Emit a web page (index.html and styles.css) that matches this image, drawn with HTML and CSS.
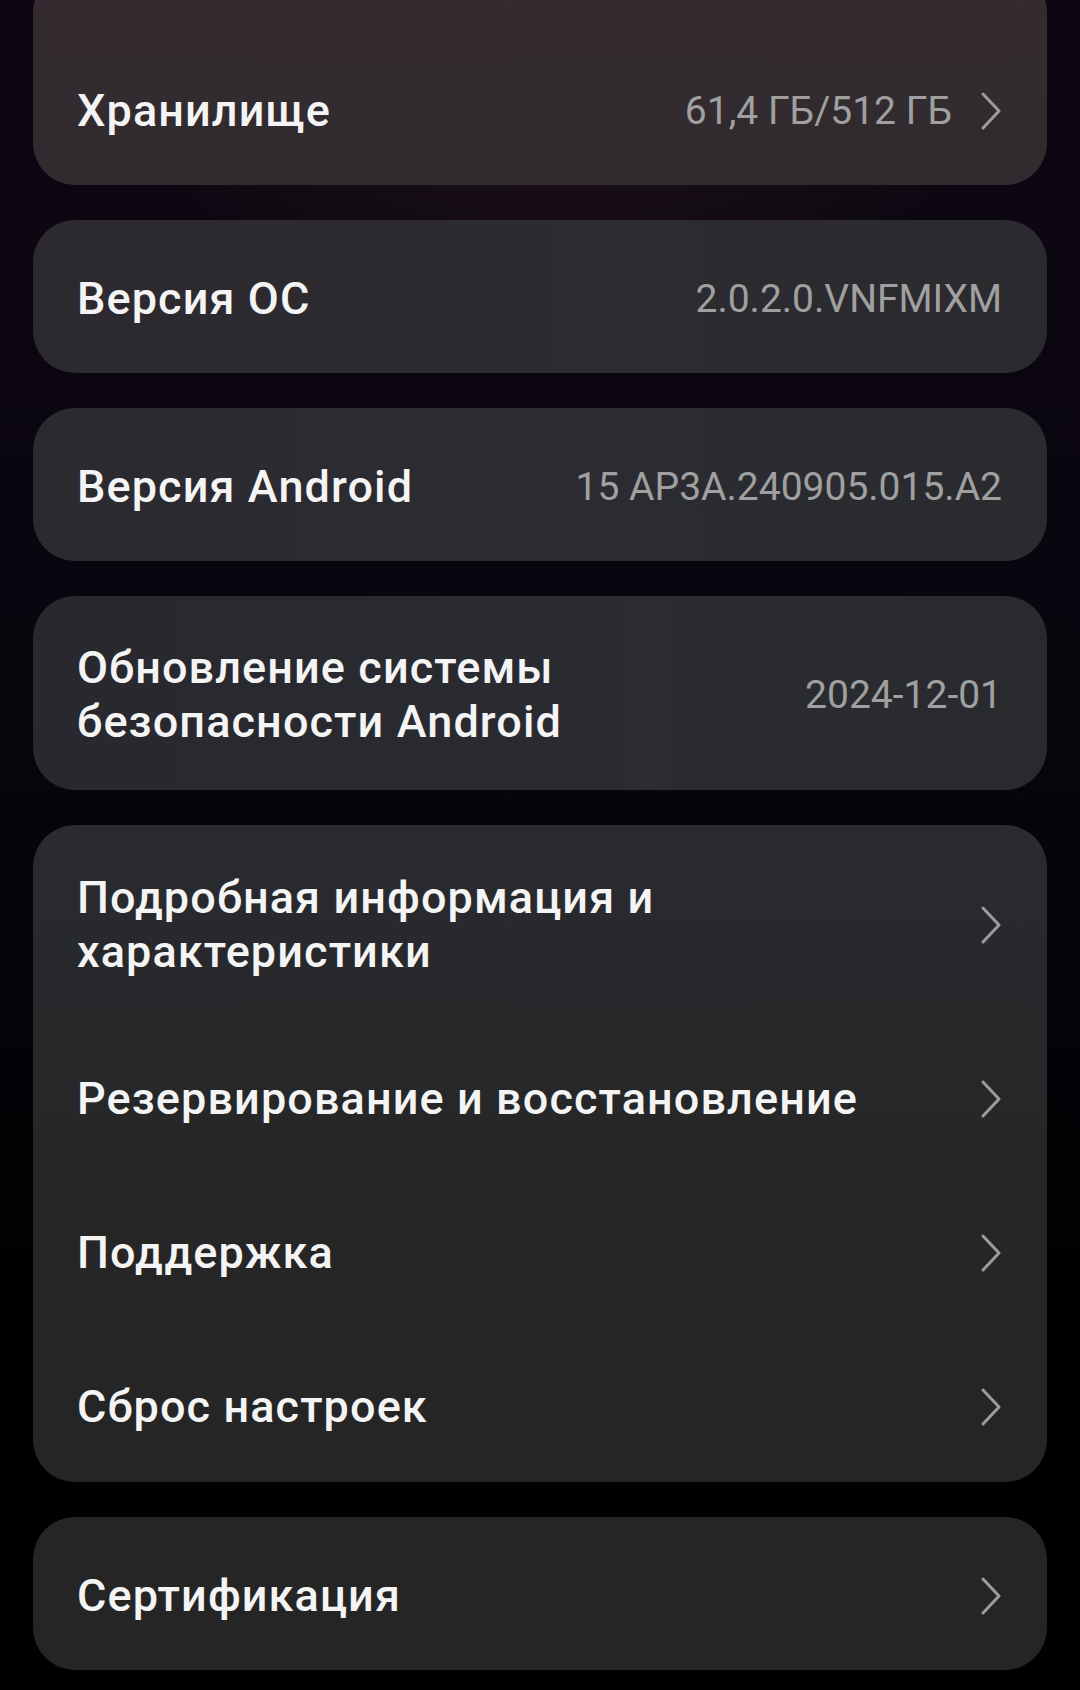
FILE: index.html
```html
<!DOCTYPE html>
<html lang="ru">
<head>
<meta charset="utf-8">
<title>О телефоне</title>
<link rel="stylesheet" href="styles.css">
</head>
<body>
<div class="page">
  <section class="card card-storage">
    <div class="row">
      <span class="title">Хранилище</span>
      <span class="right"><span class="value">61,4 ГБ/512 ГБ</span><svg class="chev" viewBox="0 0 22 38" width="22" height="38"><path d="M3 2 L19 19 L3 36" fill="none" stroke="#9c9c9c" stroke-width="3" stroke-linecap="round" stroke-linejoin="round"/></svg></span>
    </div>
  </section>
  <section class="card card-os">
    <div class="row">
      <span class="title">Версия ОС</span>
      <span class="value">2.0.2.0.VNFMIXM</span>
    </div>
  </section>
  <section class="card card-android">
    <div class="row">
      <span class="title">Версия Android</span>
      <span class="value">15 AP3A.240905.015.A2</span>
    </div>
  </section>
  <section class="card card-security">
    <div class="row tall">
      <span class="title">Обновление системы<br>безопасности Android</span>
      <span class="value">2024-12-01</span>
    </div>
  </section>
  <section class="card card-group">
    <div class="row tall">
      <span class="title">Подробная информация и<br>характеристики</span>
      <svg class="chev" viewBox="0 0 22 38" width="22" height="38"><path d="M3 2 L19 19 L3 36" fill="none" stroke="#9c9c9c" stroke-width="3" stroke-linecap="round" stroke-linejoin="round"/></svg>
    </div>
    <div class="row">
      <span class="title">Резервирование и восстановление</span>
      <svg class="chev" viewBox="0 0 22 38" width="22" height="38"><path d="M3 2 L19 19 L3 36" fill="none" stroke="#9c9c9c" stroke-width="3" stroke-linecap="round" stroke-linejoin="round"/></svg>
    </div>
    <div class="row">
      <span class="title">Поддержка</span>
      <svg class="chev" viewBox="0 0 22 38" width="22" height="38"><path d="M3 2 L19 19 L3 36" fill="none" stroke="#9c9c9c" stroke-width="3" stroke-linecap="round" stroke-linejoin="round"/></svg>
    </div>
    <div class="row">
      <span class="title">Сброс настроек</span>
      <svg class="chev" viewBox="0 0 22 38" width="22" height="38"><path d="M3 2 L19 19 L3 36" fill="none" stroke="#9c9c9c" stroke-width="3" stroke-linecap="round" stroke-linejoin="round"/></svg>
    </div>
  </section>
  <section class="card card-cert">
    <div class="row">
      <span class="title">Сертификация</span>
      <svg class="chev" viewBox="0 0 22 38" width="22" height="38"><path d="M3 2 L19 19 L3 36" fill="none" stroke="#9c9c9c" stroke-width="3" stroke-linecap="round" stroke-linejoin="round"/></svg>
    </div>
  </section>
</div>
</body>
</html>
```
FILE: styles.css
```css
html, body {
  margin: 0;
  padding: 0;
}
body {
  width: 1080px;
  height: 1690px;
  overflow: hidden;
  background:
    radial-gradient(ellipse 700px 500px at 560px 0px, rgba(60, 36, 30, 0.55), rgba(0,0,0,0) 70%),
    linear-gradient(180deg, #0d0713 0%, #0a0610 30%, #05040a 55%, #000000 80%);
  font-family: Roboto, "Noto Sans", "Liberation Sans", sans-serif;
  -webkit-font-smoothing: antialiased;
}
.page {
  display: flex;
  flex-direction: column;
  gap: 35px;
  padding: 0 33px;
}
.card {
  border-radius: 42px;
  overflow: hidden;
}
.card-storage {
  margin-top: -30px;
  padding-top: 62px;
  background: linear-gradient(180deg, #352b31 0%, #322b2f 60%, #2f2b2e 100%);
}
.card-os {
  background: linear-gradient(90deg, #2d2a2f 0%, #2c2b30 60%, #2b2b2f 100%);
}
.card-android {
  background: linear-gradient(90deg, #2b2a30 0%, #2b2c31 60%, #2a2b2f 100%);
}
.card-security {
  background: linear-gradient(90deg, #28282e 0%, #2a2c31 60%, #292a2e 100%);
}
.card-group {
  background: linear-gradient(180deg, #2a2b30 0%, #27282a 30%, #262626 60%, #252525 100%);
}
.card-cert {
  background: #252525;
}
.row {
  display: flex;
  align-items: center;
  justify-content: space-between;
  box-sizing: border-box;
  height: 153px;
  padding: 4px 45px 0 44px;
}
.row.tall {
  height: 194px;
}
.card-group .row {
  height: 154px;
}
.card-group .row.tall {
  height: 195px;
}
.title {
  color: #f4f4f4;
  font-size: 45px;
  font-weight: 500;
  line-height: 54px;
  letter-spacing: 1.1px;
}
.value {
  color: #a0a0a0;
  font-size: 39px;
  font-weight: 400;
  line-height: 54px;
  white-space: nowrap;
}
.right {
  display: flex;
  align-items: center;
  gap: 28px;
}
.chev {
  flex-shrink: 0;
  display: block;
}
```
